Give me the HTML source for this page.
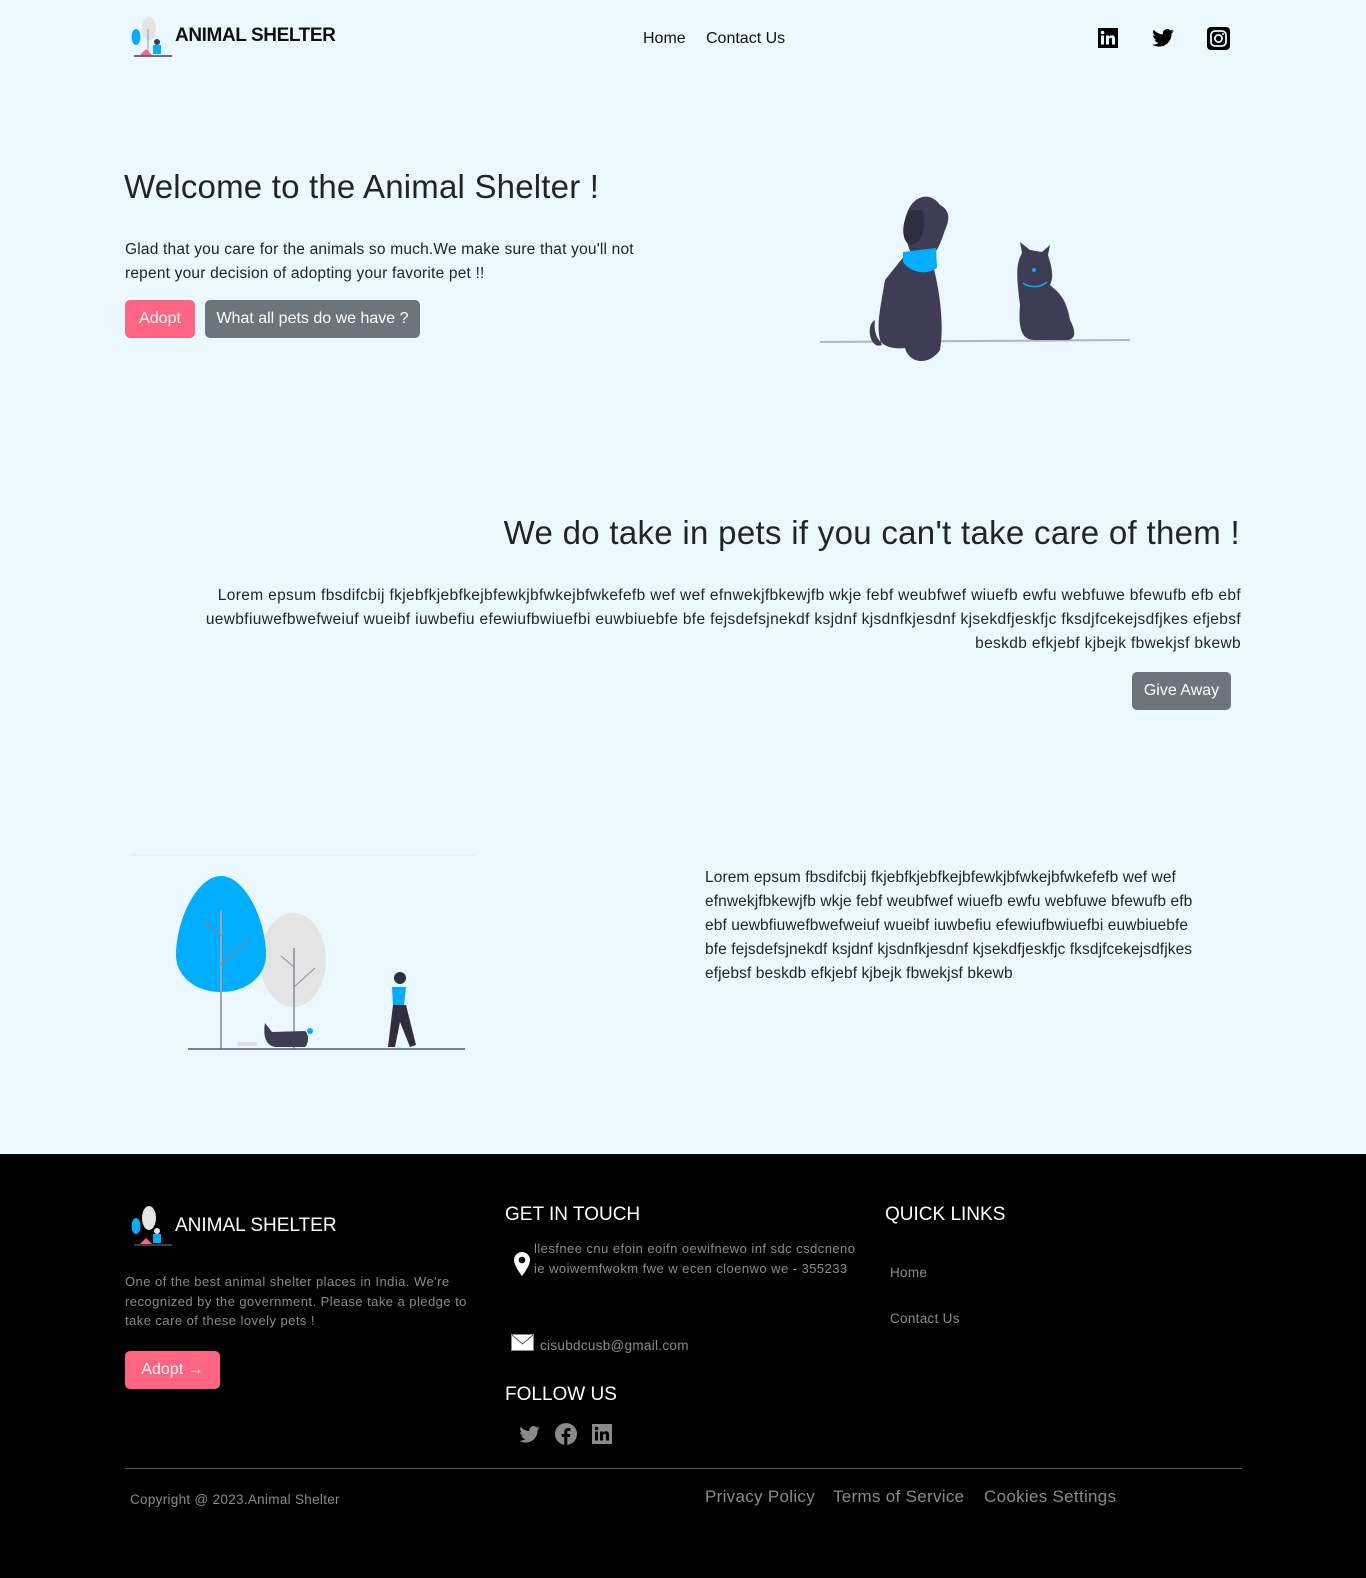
<!DOCTYPE html>
<html><head><meta charset="utf-8">
<style>
*{margin:0;padding:0;box-sizing:border-box}
body{width:1366px;height:1578px;background:#ebf8ff;font-family:"Liberation Sans",sans-serif;position:relative;overflow:hidden;color:#212529}
.a{position:absolute;white-space:nowrap}
.btn{position:absolute;border-radius:5px;color:#fff;font-size:16px;display:flex;align-items:center;justify-content:center}
.pink{background:#ff6482}
.gray{background:#6c757d}
p.t{position:absolute;font-size:15.5px;line-height:24px;letter-spacing:0.2px}
footer{position:absolute;left:0;top:1154px;width:1366px;height:424px;background:#000}
.fg{color:#8a8a8a;letter-spacing:0.3px}
</style></head><body>

<!-- header -->
<svg class="a" style="left:128px;top:15px" width="46" height="44" viewBox="0 0 46 44">
<ellipse cx="21" cy="14" rx="7" ry="12" fill="#e4e4e4"/><ellipse cx="8" cy="22" rx="4.5" ry="8" fill="#00aeff"/>
<line x1="20" y1="14" x2="20" y2="38" stroke="#999" stroke-width="1"/>
<circle cx="29" cy="27" r="3" fill="#3f3d56"/><rect x="25" y="30" width="8" height="9" fill="#00aeff"/>
<path d="M12 40 L18 34 L24 40Z" fill="#ff6482"/><line x1="6" y1="41" x2="44" y2="41" stroke="#3f3d56" stroke-width="1.5"/></svg>
<div class="a" style="left:175px;top:25px;font-size:19px;font-weight:bold;letter-spacing:-0.4px;color:#111">ANIMAL SHELTER</div>
<div class="a" style="left:643px;top:30px;font-size:16px;color:#111">Home</div>
<div class="a" style="left:706px;top:30px;font-size:16px;color:#111">Contact Us</div>
<svg class="a" style="left:1098px;top:28px" width="20" height="20" viewBox="0 0 20 20"><rect width="20" height="20" fill="#000"/><rect x="3" y="7.5" width="3" height="9" fill="#ebf8ff"/><circle cx="4.5" cy="4.5" r="1.8" fill="#ebf8ff"/><path d="M8 7.5h3v1.4c.6-1 1.7-1.6 3-1.6 2.3 0 3 1.4 3 3.8v5.4h-3v-4.8c0-1.2-.3-1.9-1.3-1.9S11 10.6 11 11.8v4.7H8z" fill="#ebf8ff"/></svg>
<svg class="a" style="left:1152px;top:29px" width="22" height="18" viewBox="0 0 24 20"><path d="M24 2.4c-.9.4-1.8.6-2.8.8 1-.6 1.8-1.6 2.2-2.7-1 .6-2 1-3.1 1.2A4.9 4.9 0 0 0 11.9 6 14 14 0 0 1 1.7.9a4.9 4.9 0 0 0 1.5 6.6c-.8 0-1.6-.3-2.2-.6 0 2.4 1.7 4.4 3.9 4.8-.7.2-1.5.2-2.2.1.6 2 2.4 3.4 4.6 3.4A9.9 9.9 0 0 1 0 17.3 14 14 0 0 0 7.5 19.5c9.1 0 14-7.5 14-14v-.6c1-.7 1.8-1.6 2.5-2.5z" fill="#000"/></svg>
<svg class="a" style="left:1207px;top:27px" width="23" height="23" viewBox="0 0 23 23"><rect width="23" height="23" rx="4" fill="#000"/><rect x="4" y="4" width="15" height="15" rx="4" fill="none" stroke="#ebf8ff" stroke-width="1.8"/><circle cx="11.5" cy="11.5" r="3.6" fill="none" stroke="#ebf8ff" stroke-width="1.8"/><circle cx="16" cy="7" r="1" fill="#ebf8ff"/></svg>

<!-- hero -->
<div class="a" style="left:124px;top:168px;font-size:33px;letter-spacing:0.2px;color:#212529">Welcome to the Animal Shelter !</div>
<p class="t" style="left:125px;top:238px;width:530px">Glad that you care for the animals so much.We make sure that you'll not repent your decision of adopting your favorite pet !!</p>
<div class="btn pink" style="left:125px;top:300px;width:70px;height:38px">Adopt</div>
<div class="btn gray" style="left:205px;top:300px;width:215px;height:38px">What all pets do we have ?</div>

<svg class="a" style="left:810px;top:180px" width="330" height="190" viewBox="0 0 330 190">
<line x1="10" y1="162" x2="320" y2="160" stroke="#b0b5bf" stroke-width="2"/>
<path d="M75 100 C70 130 65 150 72 165 C60 170 55 145 65 140 C62 165 80 170 95 168 C100 185 120 185 130 170 C135 140 128 100 120 75 L95 75 Z" fill="#3f3d56"/>
<path d="M95 40 C100 15 120 10 130 25 C140 30 140 40 135 50 C130 65 125 80 110 80 C100 80 95 60 95 40Z" fill="#3f3d56"/>
<path d="M100 30 C92 40 90 60 100 65 C110 65 118 50 112 30 Z" fill="#2f2e41"/>
<path d="M93 72 L126 68 L127 88 C115 96 100 92 93 82Z" fill="#00aeff"/>
<path d="M210 62 L212 73 C205 85 207 100 210 125 C208 150 212 160 225 160 L258 160 C268 158 264 148 260 140 C256 115 245 110 240 105 C245 95 240 82 238 75 L240 65 L232 72 L220 70 Z" fill="#3f3d56"/>
<path d="M213 103 C220 108 230 108 237 102" stroke="#00aeff" stroke-width="1.6" fill="none"/>
<circle cx="224" cy="90" r="2" fill="#00aeff"/>
</svg>

<!-- section 2 -->
<div class="a" style="right:126px;top:514px;font-size:33px;letter-spacing:0.3px;color:#212529">We do take in pets if you can't take care of them !</div>
<p class="t" style="left:160px;top:584px;width:1081px;text-align:right;letter-spacing:0.35px">Lorem epsum fbsdifcbij fkjebfkjebfkejbfewkjbfwkejbfwkefefb wef wef efnwekjfbkewjfb wkje febf weubfwef wiuefb ewfu webfuwe bfewufb efb ebf uewbfiuwefbwefweiuf wueibf iuwbefiu efewiufbwiuefbi euwbiuebfe bfe fejsdefsjnekdf ksjdnf kjsdnfkjesdnf kjsekdfjeskfjc fksdjfcekejsdfjkes efjebsf beskdb efkjebf kjbejk fbwekjsf bkewb</p>
<div class="btn gray" style="left:1132px;top:672px;width:99px;height:38px">Give Away</div>

<!-- section 3 -->
<svg class="a" style="left:120px;top:840px" width="360" height="220" viewBox="0 0 360 220">
<line x1="10" y1="15" x2="355" y2="15" stroke="#e4eef4" stroke-width="1.5"/>
<ellipse cx="173" cy="120" rx="33" ry="47" fill="#e4e4e4"/>
<path d="M101 36 C125 36 146 80 146 115 C146 135 128 152 101 152 C74 152 56 135 56 115 C56 80 77 36 101 36Z" fill="#00aeff"/>
<line x1="101" y1="70" x2="101" y2="209" stroke="#a0a5ad" stroke-width="2"/>
<line x1="101" y1="124" x2="131" y2="97" stroke="#7a8094" stroke-width="1.5"/><line x1="101" y1="96" x2="83" y2="80" stroke="#7a8094" stroke-width="1.5"/>
<line x1="174" y1="108" x2="174" y2="209" stroke="#a0a5ad" stroke-width="2"/>
<line x1="174" y1="147" x2="195" y2="128" stroke="#8a8fa0" stroke-width="1"/><line x1="174" y1="127" x2="161" y2="116" stroke="#8a8fa0" stroke-width="1"/>
<rect x="117" y="202" width="20" height="4" rx="2" fill="#ddd"/>
<path d="M145 183 L152 192 L185 191 C190 195 188 205 185 207 L155 207 C145 205 143 195 145 183Z" fill="#3f3d56"/>
<circle cx="190" cy="191" r="3" fill="#00aeff"/>
<circle cx="280" cy="138" r="6" fill="#2f2e41"/>
<path d="M272 147 L286 147 L284 165 L273 165Z" fill="#00aeff"/>
<path d="M273 165 L286 165 L296 205 L290 207 L280 182 L275 207 L268 207Z" fill="#2f2e41"/>
<line x1="68" y1="209" x2="345" y2="209" stroke="#555a66" stroke-width="1.5"/>
</svg>
<p class="t" style="left:705px;top:866px;width:505px;letter-spacing:0.1px">Lorem epsum fbsdifcbij fkjebfkjebfkejbfewkjbfwkejbfwkefefb wef wef efnwekjfbkewjfb wkje febf weubfwef wiuefb ewfu webfuwe bfewufb efb ebf uewbfiuwefbwefweiuf wueibf iuwbefiu efewiufbwiuefbi euwbiuebfe bfe fejsdefsjnekdf ksjdnf kjsdnfkjesdnf kjsekdfjeskfjc fksdjfcekejsdfjkes efjebsf beskdb efkjebf kjbejk fbwekjsf bkewb</p>

<!-- footer -->
<footer>
<svg class="a" style="left:128px;top:50px" width="46" height="44" viewBox="0 0 46 44">
<ellipse cx="21" cy="14" rx="7" ry="12" fill="#e4e4e4"/><ellipse cx="8" cy="22" rx="4.5" ry="8" fill="#00aeff"/>
<circle cx="29" cy="27" r="3" fill="#e4e4e4"/><rect x="25" y="30" width="8" height="9" fill="#00aeff"/>
<path d="M12 40 L18 34 L24 40Z" fill="#ff6482"/><line x1="6" y1="41" x2="44" y2="41" stroke="#555" stroke-width="1.5"/></svg>
<div class="a" style="left:175px;top:61px;font-size:19px;color:#fff">ANIMAL SHELTER</div>
<p class="a fg" style="left:125px;top:118px;font-size:13px;line-height:19.5px;white-space:normal;width:345px;letter-spacing:0.45px">One of the best animal shelter places in India. We're recognized by the government. Please take a pledge to take care of these lovely pets !</p>
<div class="btn pink" style="left:125px;top:197px;width:95px;height:38px;font-size:16px">Adopt →</div>

<div class="a" style="left:505px;top:50px;font-size:19px;color:#fff">GET IN TOUCH</div>
<svg class="a" style="left:514px;top:98px" width="16" height="24" viewBox="0 0 16 24"><path d="M8 0a8 8 0 0 0-8 8c0 6 8 16 8 16s8-10 8-16a8 8 0 0 0-8-8z" fill="#fff"/><circle cx="8" cy="8" r="3.3" fill="#000"/></svg>
<p class="a fg" style="left:534px;top:85px;font-size:13px;line-height:19.5px;white-space:normal;width:322px;letter-spacing:0.45px">llesfnee cnu efoin eoifn oewifnewo inf sdc csdcneno ie woiwemfwokm fwe w ecen cloenwo we - 355233</p>
<svg class="a" style="left:511px;top:180px" width="23" height="17" viewBox="0 0 23 17"><rect x="0.5" y="0.5" width="22" height="16" fill="#fff" stroke="#888"/><path d="M1 1 L11.5 10 L22 1" stroke="#555" fill="none"/></svg>
<div class="a fg" style="left:540px;top:184px;font-size:13.5px">cisubdcusb@gmail.com</div>
<div class="a" style="left:505px;top:230px;font-size:19px;color:#fff">FOLLOW US</div>
<svg class="a" style="left:519px;top:272px" width="21" height="17" viewBox="0 0 24 20"><path d="M24 2.4c-.9.4-1.8.6-2.8.8 1-.6 1.8-1.6 2.2-2.7-1 .6-2 1-3.1 1.2A4.9 4.9 0 0 0 11.9 6 14 14 0 0 1 1.7.9a4.9 4.9 0 0 0 1.5 6.6c-.8 0-1.6-.3-2.2-.6 0 2.4 1.7 4.4 3.9 4.8-.7.2-1.5.2-2.2.1.6 2 2.4 3.4 4.6 3.4A9.9 9.9 0 0 1 0 17.3 14 14 0 0 0 7.5 19.5c9.1 0 14-7.5 14-14v-.6c1-.7 1.8-1.6 2.5-2.5z" fill="#8a8a8a"/></svg>
<svg class="a" style="left:555px;top:269px" width="22" height="22" viewBox="0 0 22 22"><circle cx="11" cy="11" r="11" fill="#8a8a8a"/><path d="M12.3 22v-8h2.6l.4-3h-3V9.2c0-.9.3-1.5 1.6-1.5h1.6V5c-.3 0-1.2-.1-2.3-.1-2.3 0-3.9 1.4-3.9 4V11H6.7v3h2.6v8z" fill="#000"/></svg>
<svg class="a" style="left:592px;top:270px" width="20" height="20" viewBox="0 0 20 20"><rect width="20" height="20" fill="#8a8a8a"/><rect x="3" y="7.5" width="3" height="9" fill="#000"/><circle cx="4.5" cy="4.5" r="1.8" fill="#000"/><path d="M8 7.5h3v1.4c.6-1 1.7-1.6 3-1.6 2.3 0 3 1.4 3 3.8v5.4h-3v-4.8c0-1.2-.3-1.9-1.3-1.9S11 10.6 11 11.8v4.7H8z" fill="#000"/></svg>

<div class="a" style="left:885px;top:50px;font-size:19px;color:#fff">QUICK LINKS</div>
<div class="a fg" style="left:890px;top:111px;font-size:13.5px">Home</div>
<div class="a fg" style="left:890px;top:157px;font-size:13.5px">Contact Us</div>

<div class="a" style="left:125px;top:314px;width:1117px;height:1px;background:#555"></div>
<div class="a fg" style="left:130px;top:338px;font-size:13.5px">Copyright @ 2023.Animal Shelter</div>
<div class="a fg" style="left:705px;top:333px;font-size:17px">Privacy Policy</div>
<div class="a fg" style="left:833px;top:333px;font-size:17px">Terms of Service</div>
<div class="a fg" style="left:984px;top:333px;font-size:17px">Cookies Settings</div>
</footer>
</body></html>
